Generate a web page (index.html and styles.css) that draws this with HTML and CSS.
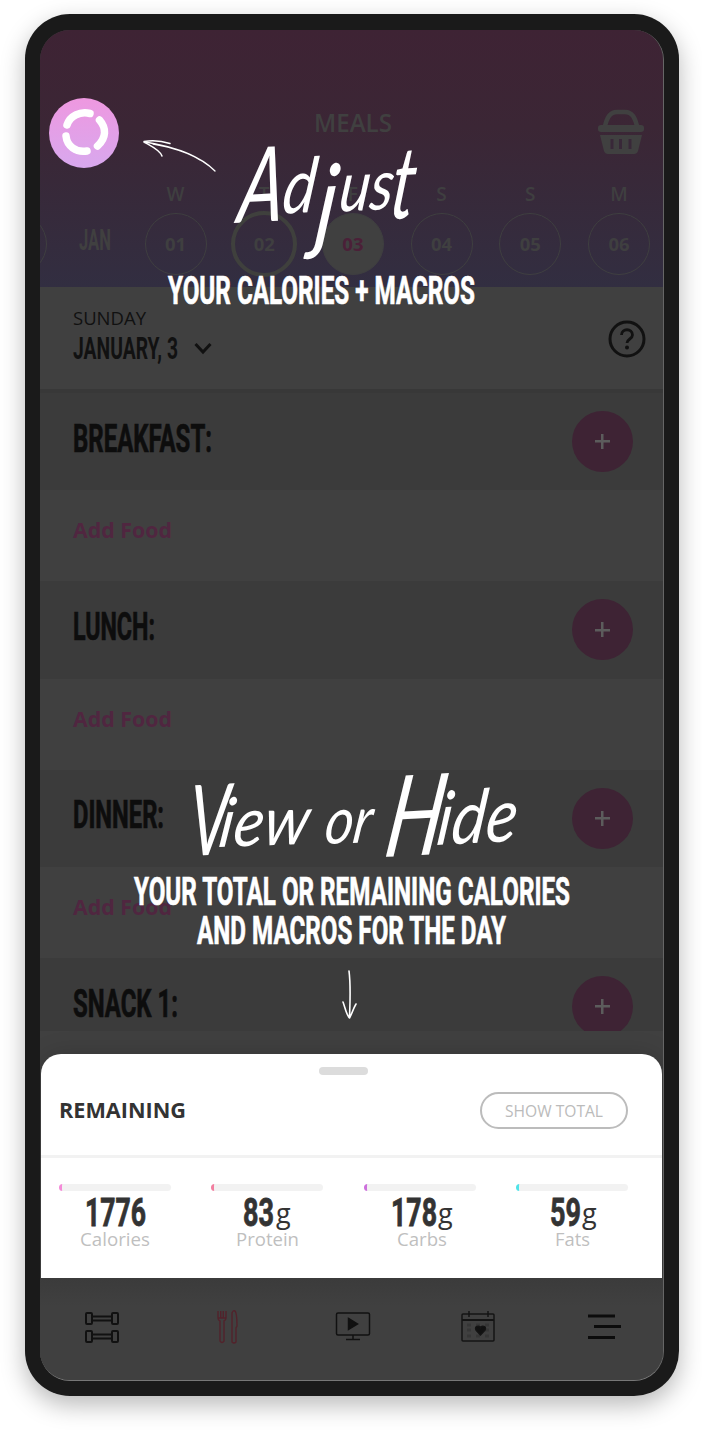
FILE: index.html
```html
<!DOCTYPE html>
<html lang="en">
<head>
<meta charset="utf-8">
<title>Meals</title>
<link rel="stylesheet" href="styles.css">
</head>
<body>
<main class="phone">
  <div class="screen">
    <header class="header">
      <div class="titlebar">
        <h1 class="title"><svg width="78" height="24"><text class="sans semi" x="0" y="21" font-size="25" textLength="78" lengthAdjust="spacingAndGlyphs">MEALS</text></svg></h1>
        <svg class="basket" width="46" height="46" viewBox="0 0 46 46"><path d="M6.500 19C9 8 12 3 19 3h8c7 0 10 5 12.500 16" fill="none" stroke="#404040" stroke-width="4.500"/><rect x="0" y="16" width="46" height="7" rx="3" fill="#404040"/><path d="M2 26h42l-4 16q-1 3-4 3H10q-3 0-4-3z" fill="#404040"/><path d="M14 30v10M22.500 30v10M32 30v10" stroke="#382838" stroke-width="3"/></svg>
      </div>
      <div class="days">
        <span class="previous"></span>
        <div class="month"><svg width="32" height="24"><text class="cond" x="0" y="22" font-size="30" textLength="32" lengthAdjust="spacingAndGlyphs">JAN</text></svg></div>
        <div class="day"><b>W</b><span>01</span></div>
        <div class="day today"><b>T</b><span>02</span></div>
        <div class="day active"><b>F</b><span>03</span></div>
        <div class="day"><b>S</b><span>04</span></div>
        <div class="day"><b>S</b><span>05</span></div>
        <div class="day"><b>M</b><span>06</span></div>
      </div>
    </header>
    <section class="datebar">
      <div>
        <svg class="block" width="80" height="20"><text class="sans" x="0" y="16" font-size="19" textLength="73" lengthAdjust="spacingAndGlyphs">SUNDAY</text></svg>
        <div class="date"><svg width="104" height="28"><text class="cond" x="0" y="23" font-size="30.500" textLength="105" lengthAdjust="spacingAndGlyphs">JANUARY, 3</text></svg><svg width="18" height="12"><path d="M1.500 2l7.500 8 7.500-8" fill="none" stroke="#111" stroke-width="3"/></svg></div>
      </div>
      <svg class="help" width="38" height="38" viewBox="0 0 38 38" fill="none" stroke="#111"><circle cx="19" cy="19" r="17" stroke-width="3"/><path d="M13.500 15c0-7 11-7 11 0 0 4-5.500 4-5.500 8" stroke-width="2.800"/><circle cx="19" cy="27.500" r="1" stroke-width="2"/></svg>
    </section>
    <div class="list">
      <section class="meal"><svg width="140" height="30"><text class="cond" x="0" y="28.500" font-size="38.500" textLength="139" lengthAdjust="spacingAndGlyphs">BREAKFAST:</text></svg><span class="plus"></span></section>
      <div class="add"><svg width="100" height="24"><text class="sans bold" x="0" y="20" font-size="22" textLength="99" lengthAdjust="spacingAndGlyphs">Add Food</text></svg></div>
      <section class="meal"><svg width="140" height="30"><text class="cond" x="0" y="28.500" font-size="38.500" textLength="82" lengthAdjust="spacingAndGlyphs">LUNCH:</text></svg><span class="plus"></span></section>
      <div class="add"><svg width="100" height="24"><text class="sans bold" x="0" y="20" font-size="22" textLength="99" lengthAdjust="spacingAndGlyphs">Add Food</text></svg></div>
      <section class="meal"><svg width="140" height="30"><text class="cond" x="0" y="28.500" font-size="38.500" textLength="91" lengthAdjust="spacingAndGlyphs">DINNER:</text></svg><span class="plus"></span></section>
      <div class="add"><svg width="100" height="24"><text class="sans bold" x="0" y="20" font-size="22" textLength="99" lengthAdjust="spacingAndGlyphs">Add Food</text></svg></div>
      <section class="meal"><svg width="140" height="30"><text class="cond" x="0" y="28.500" font-size="38.500" textLength="105" lengthAdjust="spacingAndGlyphs">SNACK 1:</text></svg><span class="plus"></span></section>
    </div>
    <section class="sheet">
      <div class="handle"></div>
      <div class="summary">
        <svg width="128" height="20"><text class="sans bold" x="0" y="18" font-size="22" textLength="127" lengthAdjust="spacingAndGlyphs">REMAINING</text></svg>
        <span class="toggle"><svg width="98" height="18"><text class="sans" x="0" y="15" font-size="15.500" textLength="98" lengthAdjust="spacingAndGlyphs">SHOW TOTAL</text></svg></span>
      </div>
      <div class="macros">
        <div class="macro pink"><i></i><svg width="112" height="60"><text class="cond" x="26" y="35" font-size="39" textLength="61" lengthAdjust="spacingAndGlyphs">1776</text><text class="sans name" x="21" y="55" font-size="19" textLength="70" lengthAdjust="spacingAndGlyphs">Calories</text></svg></div>
        <div class="macro red"><i></i><svg width="112" height="60"><text class="cond" x="32" y="35" font-size="39" textLength="31" lengthAdjust="spacingAndGlyphs">83</text><text class="sans" x="65" y="32" font-size="27">g</text><text class="sans name" x="25" y="55" font-size="19" textLength="63" lengthAdjust="spacingAndGlyphs">Protein</text></svg></div>
        <div class="macro purple"><i></i><svg width="112" height="60"><text class="cond" x="27" y="35" font-size="39" textLength="46" lengthAdjust="spacingAndGlyphs">178</text><text class="sans" x="74" y="32" font-size="27">g</text><text class="sans name" x="33" y="55" font-size="19" textLength="50" lengthAdjust="spacingAndGlyphs">Carbs</text></svg></div>
        <div class="macro cyan"><i></i><svg width="112" height="60"><text class="cond" x="34" y="35" font-size="39" textLength="31" lengthAdjust="spacingAndGlyphs">59</text><text class="sans" x="66" y="32" font-size="27">g</text><text class="sans name" x="39" y="55" font-size="19" textLength="35" lengthAdjust="spacingAndGlyphs">Fats</text></svg></div>
      </div>
    </section>
    <nav class="nav">
      <svg width="36" height="34" viewBox="0 0 36 34" fill="none" stroke="#111" stroke-width="2"><g id="bell"><rect x="2" y="3" width="6" height="11" rx="1"/><rect x="28" y="3" width="6" height="11" rx="1"/><path d="M8 6.500h20M8 10.500h20"/></g><use href="#bell" y="18"/></svg>
      <svg width="22" height="36" viewBox="0 0 22 36" fill="none" stroke="#52222b" stroke-width="1.400"><path d="M2 2v7q0 2 2 3v20q2 3 4 0V12q2-1 2-3V2M4.700 2v7M7.300 2v7M2 9h8M16 33V4q1-3 3-2 2 2 2 15l-1 2v14q-2 2-4 0z"/></svg>
      <svg width="36" height="32" viewBox="0 0 36 32" fill="none" stroke="#111" stroke-width="1.500"><rect x="1.500" y="2" width="33" height="22" rx="1.500"/><path d="M18 24v4M11 28.500h14"/><path d="M13.500 7.500l9 5.500-9 5.500z" fill="#111"/></svg>
      <svg width="36" height="36" viewBox="0 0 36 36" fill="none" stroke="#141414" stroke-width="1.500"><rect x="2" y="5" width="32" height="27" rx="1"/><path d="M2 11h32" stroke-width="2"/><path d="M9 2v6M28 2v6"/><path d="M7 16h22M7 21h22M7 27h22" stroke="#363636" stroke-width="3" stroke-dasharray="4 5"/><path d="M20.500 26l-4.500-5c-2-4 3.500-5 4.500-2 1-3 6.500-2 4.500 2z" fill="#111"/></svg>
      <svg width="36" height="30" viewBox="0 0 36 30" stroke="#0c0c0c" stroke-width="3"><path d="M2 4h27M8 14.500h27M2 25.500h27"/></svg>
    </nav>
  </div>
</main>

<svg class="spotlight" width="70" height="70" viewBox="0 0 70 70">
  <defs><linearGradient id="glow" x2="0" y2="1"><stop stop-color="#ee98e0"/><stop offset="1" stop-color="#d8a8ee"/></linearGradient></defs>
  <circle cx="35" cy="35" r="35" fill="url(#glow)"/>
  <path d="M41 15.500C31 13 21 18 18 27M17 38c1 10 10 17 21 15M50.500 22c7 8 7 18-2 26" fill="none" stroke="#fff" stroke-width="7.500" stroke-linecap="round"/>
</svg>

<svg class="hint" width="702" height="1060" fill="#fff">
  <g fill="none" stroke="#fff" stroke-linecap="round">
    <path d="M144 141.500C153 140 162 141 170 143.500M144 142C151 146 160 150 162 156" stroke-width="1.500"/>
    <path d="M215 171C200 156 176 147 145 142M200 160C187 151 170 147 153 144" stroke-width="1.300"/>
    <path d="M349 971C351 986 350 1002 349.500 1018M343 1002C345 1007 346 1014 349.500 1018M356 1004C353 1009 352 1014 349.500 1018" stroke-width="1.600"/>
  </g>
  <g class="script">
    <g transform="translate(236 223) rotate(-3) skewX(-10)"><text><tspan x="0" y="0" font-size="104" textLength="45" lengthAdjust="spacingAndGlyphs">A</tspan><tspan x="44" y="-7" font-size="76" textLength="33" lengthAdjust="spacingAndGlyphs">d</tspan><tspan x="80" y="21" font-size="104" textLength="20" lengthAdjust="spacingAndGlyphs">j</tspan><tspan x="101" y="-6" font-size="70" textLength="54" lengthAdjust="spacingAndGlyphs">us</tspan><tspan x="153" y="4" font-size="100" textLength="24" lengthAdjust="spacingAndGlyphs">t</tspan></text></g>
    <g transform="translate(188 856) rotate(-3) skewX(-6)"><text font-size="98" textLength="40" lengthAdjust="spacingAndGlyphs">V</text></g>
    <g transform="translate(217 847) rotate(-2) skewX(-10)"><text font-size="68" textLength="90" lengthAdjust="spacingAndGlyphs">iew</text></g>
    <g transform="translate(323 844) rotate(-2) skewX(-10)"><text font-size="65" textLength="47" lengthAdjust="spacingAndGlyphs">or</text></g>
    <g transform="translate(382 857) rotate(-3) skewX(-12)"><text font-size="112" textLength="57" lengthAdjust="spacingAndGlyphs">H</text></g>
    <g transform="translate(435 845) rotate(-3) skewX(-10)"><text font-size="74" textLength="80" lengthAdjust="spacingAndGlyphs">ide</text></g>
  </g>
  <g class="cond" font-size="38.500">
    <text x="168" y="303.500" textLength="307" lengthAdjust="spacingAndGlyphs">YOUR CALORIES + MACROS</text>
    <text x="134" y="904.500" textLength="436" lengthAdjust="spacingAndGlyphs">YOUR TOTAL OR REMAINING CALORIES</text>
    <text x="197" y="943.500" textLength="309" lengthAdjust="spacingAndGlyphs">AND MACROS FOR THE DAY</text>
  </g>
</svg>
</body>
</html>
```
FILE: styles.css
```css
* { box-sizing: border-box; }
body { margin: 0; padding: 14px 0 0 25px; height: 1430px; overflow: hidden; background: #fff; font-family: "Open Sans", "Noto Sans", sans-serif; position: relative; }
svg { display: block; flex: none; overflow: visible; }
h1 { margin: 0; }
.phone { width: 654px; height: 1382px; padding: 16px 15px 15px; border-radius: 45px; background: #1a1a1a; box-shadow: 0 9px 24px rgba(0,0,0,.28); }
.screen { width: 624px; height: 1351px; border-radius: 30px; overflow: hidden; background: #404040; border-right: 1px solid #666; border-bottom: 1px solid #777; display: flex; flex-direction: column; }
.sans { font-family: "Open Sans", sans-serif; }
.semi { font-weight: 600; }
.bold { font-weight: 700; }
.cond { font-family: Roboto, sans-serif; font-weight: 700; }
.script { font-family: Lato, sans-serif; font-style: italic; font-weight: 400; }
.hint .cond { stroke: #fff; stroke-width: .7px; }
.meal .cond { stroke: #0d0d0d; stroke-width: .7px; }
.macro .cond { stroke: #333; stroke-width: .8px; }

.header { height: 257px; flex: none; background: linear-gradient(#3e2334, #3b2635 38%, #322e41); fill: #404040; color: #3f3f40; }
.titlebar { height: 153px; padding: 79px 19px 0 274px; display: flex; justify-content: space-between; align-items: flex-start; }
.title { padding-top: 2px; }
.days { position: relative; display: grid; grid-template-columns: repeat(7, 88.7px); padding-left: 2.500px; }
.previous { position: absolute; left: -55px; top: 29.500px; width: 62px; height: 62px; border: 1.500px solid #3f3f40; border-radius: 50%; }
.month { padding: 45px 0 0 36.500px; }
.day { display: flex; flex-direction: column; align-items: center; font-size: 19px; line-height: 22px; font-weight: 700; }
.day b { height: 29.500px; font-weight: 600; }
.day span { width: 62px; height: 62px; border: 1.500px solid #3f3f40; border-radius: 50%; display: flex; align-items: center; justify-content: center; font-size: 18.500px; padding-top: 1px; }
.today span { width: 66px; height: 66px; margin-top: -2px; border: 4px solid #3f403d; }
.active span { background: #404040; color: #4b2038; }

.datebar { height: 106px; flex: none; padding: 22px 17px 0 33px; border-bottom: 4px solid #383838; display: flex; justify-content: space-between; fill: #111; }
.date { display: flex; gap: 17px; align-items: center; margin-top: 7px; }
.date svg:last-child { margin-top: -4px; }
.help { margin-top: 11px; }
.list { height: 638px; flex: none; overflow: hidden; }
.meal { height: 97.300px; background: #3b3b3b; padding: 0 30px 0 33px; display: flex; align-items: center; justify-content: space-between; fill: #0d0d0d; }
.meal svg { margin-bottom: 8px; }
.plus { width: 61px; height: 61px; border-radius: 50%; background: linear-gradient(#5c5c5c,#5c5c5c) center/15px 2.500px no-repeat, linear-gradient(#5c5c5c,#5c5c5c) center/2.500px 15px no-repeat, #3e2334; }
.add { height: 91px; padding: 28px 33px; fill: #502640; }

.sheet { height: 224px; flex: none; margin: 23px 1px 0; background: #fff; border-radius: 20px 20px 0 0; padding-top: 13px; fill: #333; box-shadow: 0 0 24px rgba(0,0,0,.16); }
.handle { width: 49px; height: 8px; margin: 0 auto; border-radius: 4px; background: #dcdcdc; position: relative; left: -8px; }
.summary { height: 83px; border-bottom: 3px solid #f2f2f2; display: flex; align-items: center; justify-content: space-between; padding: 0 34px 9px 18px; }
.summary > svg { margin-bottom: 1px; }
.toggle { width: 148px; height: 37px; border: 2px solid #bcbcbc; border-radius: 20px; fill: #bbb; display: flex; align-items: center; justify-content: center; }
.macros { display: flex; justify-content: space-between; padding: 26px 34px 0 18px; }
.macro { width: 112px; }
.macro i { display: block; height: 7px; border-radius: 4px; background: #f2f2f2; border-left: 3px solid; }
.name { fill: #bfbfbf; }
.pink { color: #f48bd8; }
.red { color: #f27fa0; }
.purple { color: #cd70dc; }
.cyan { color: #50e3e8; }

.nav { flex: 1; display: grid; grid-template-columns: repeat(5, 125.5px); justify-content: center; justify-items: center; align-items: center; padding: 0 0 5px 2px; background: linear-gradient(#3b3b3b, #404040 28%); }
.spotlight { position: absolute; left: 49px; top: 98px; }
.hint { position: absolute; left: 0; top: 0; }
```
